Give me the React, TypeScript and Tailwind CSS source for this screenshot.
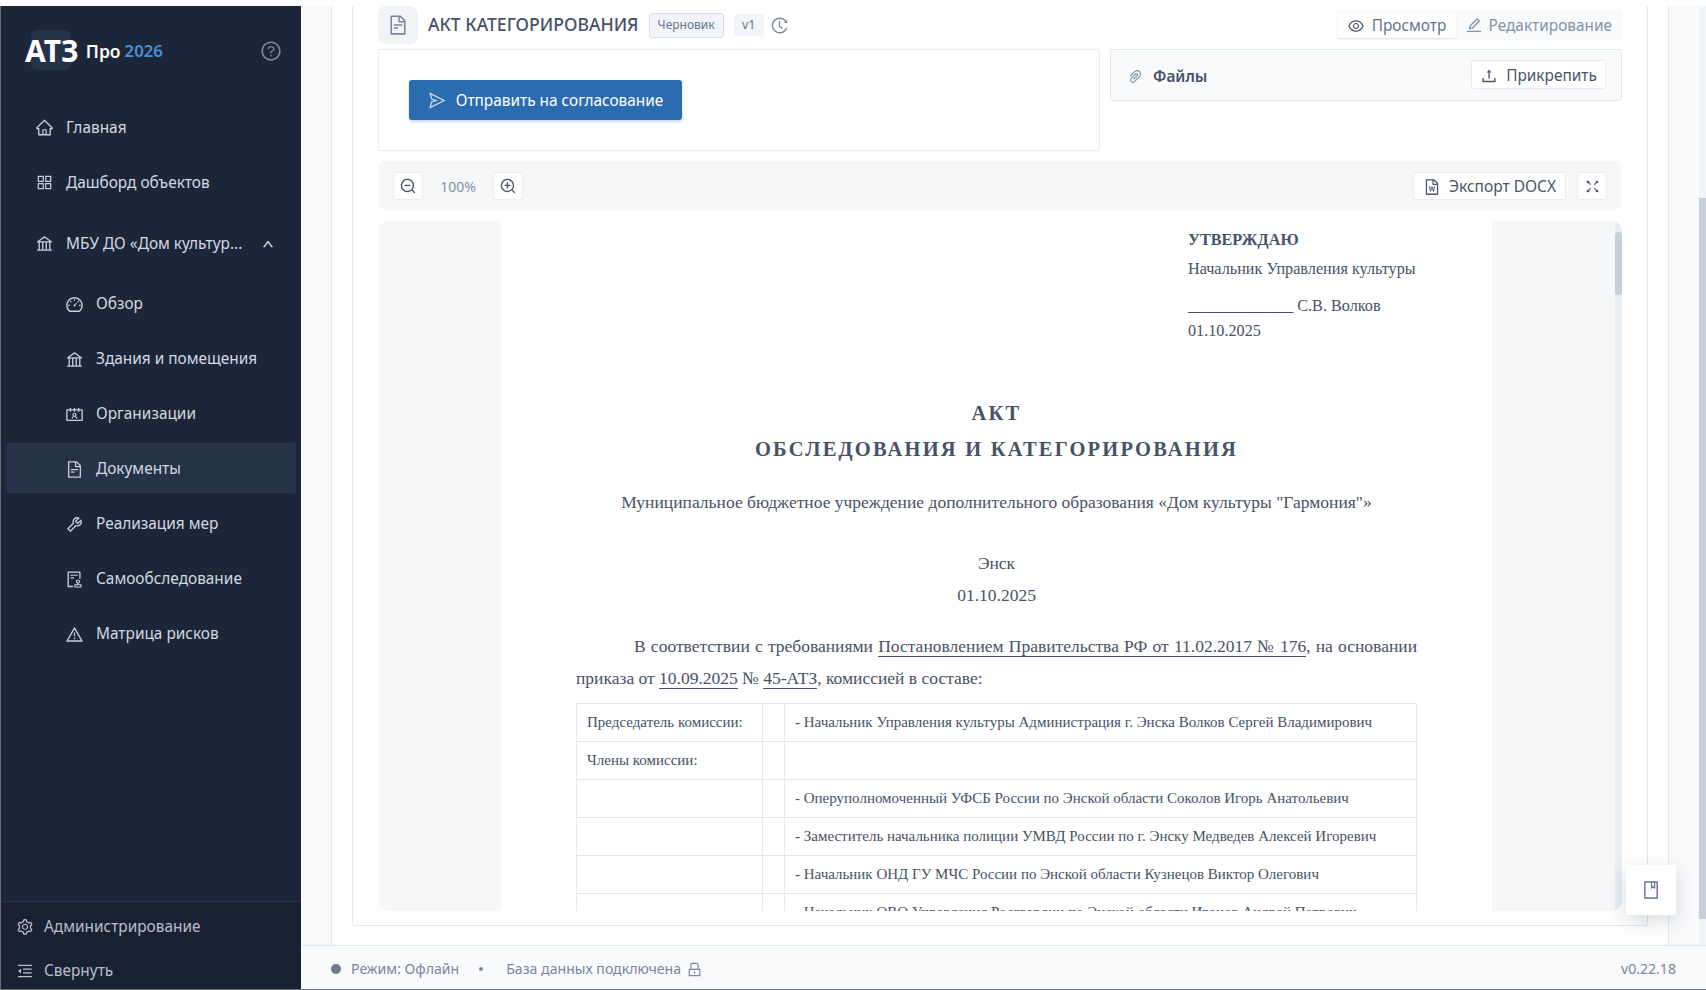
import type { ReactNode } from 'react';
import {
  AiOutlineAppstore,
  AiOutlineAudit,
  AiOutlineBank,
  AiOutlineBook,
  AiOutlineContacts,
  AiOutlineDashboard,
  AiOutlineEdit,
  AiOutlineEye,
  AiOutlineFileText,
  AiOutlineFileWord,
  AiOutlineFullscreen,
  AiOutlineHistory,
  AiOutlineHome,
  AiOutlineLock,
  AiOutlineMenuFold,
  AiOutlinePaperClip,
  AiOutlineQuestionCircle,
  AiOutlineSend,
  AiOutlineSetting,
  AiOutlineTool,
  AiOutlineUp,
  AiOutlineUpload,
  AiOutlineWarning,
  AiOutlineZoomIn,
  AiOutlineZoomOut,
} from 'react-icons/ai';

const subItems = [
  { label: 'Обзор', icon: <AiOutlineDashboard size={19} /> },
  { label: 'Здания и помещения', icon: <AiOutlineBank size={19} /> },
  { label: 'Организации', icon: <AiOutlineContacts size={19} /> },
  { label: 'Документы', icon: <AiOutlineFileText size={19} />, active: true },
  { label: 'Реализация мер', icon: <AiOutlineTool size={19} /> },
  { label: 'Самообследование', icon: <AiOutlineAudit size={19} /> },
  { label: 'Матрица рисков', icon: <AiOutlineWarning size={19} /> },
];

const commission = [
  ['Председатель комиссии:', '- Начальник Управления культуры Администрация г. Энска Волков Сергей Владимирович'],
  ['Члены комиссии:', ''],
  ['', '- Оперуполномоченный УФСБ России по Энской области Соколов Игорь Анатольевич'],
  ['', '- Заместитель начальника полиции УМВД России по г. Энску Медведев Алексей Игоревич'],
  ['', '- Начальник ОНД ГУ МЧС России по Энской области Кузнецов Виктор Олегович'],
  ['', '- Начальник ОВО Управления Росгвардии по Энской области Иванов Андрей Петрович'],
];

function NavRow({ icon, label, sub, active, right }: { icon: ReactNode; label: string; sub?: boolean; active?: boolean; right?: ReactNode }) {
  return (
    <div className="flex h-[55px] items-center">
      <div
        className={`mx-[5px] flex h-[50px] w-[290px] items-center rounded-[3px] ${sub ? 'pl-[59px] pt-[3px]' : 'pl-[29px]'} ${active ? 'bg-[#243347]' : ''}`}
      >
        <span className="flex w-[31px] shrink-0 text-[#c7ced8]">{icon}</span>
        <span className="text-[15.4px] text-[#d3d9e1]">{label}</span>
        {right}
      </div>
    </div>
  );
}

function Sidebar() {
  return (
    <aside className="flex w-[301px] shrink-0 flex-col border-l border-[#666d77] bg-[#1b2638]">
      <div className="flex h-[94px] shrink-0 items-center pb-[4px] pl-[24px]">
        <div className="relative flex items-center">
          <span className="absolute left-[6px] top-[-6px] h-[40px] w-[40px] rounded-[6px] bg-[#243347]" />
          <span className="relative text-[30px] leading-[30px] font-bold text-white">АТЗ</span>
        </div>
        <span className="ml-[7px] text-[17.5px] font-semibold text-white">Про</span>
        <span className="ml-[4px] text-[16.8px] font-semibold text-[#4a90d9]">2026</span>
        <AiOutlineQuestionCircle size={22} className="ml-auto mr-[19px] text-[#7f8998]" />
      </div>
      <nav className="flex-1">
        <NavRow icon={<AiOutlineHome size={19} />} label="Главная" />
        <NavRow icon={<AiOutlineAppstore size={19} />} label="Дашборд объектов" />
        <div className="mt-[6px]">
          <NavRow
            icon={<AiOutlineBank size={19} />}
            label="МБУ ДО «Дом культур..."
            right={<AiOutlineUp size={12} stroke="currentColor" strokeWidth={60} className="ml-[20px] text-[#d3d9e1]" />}
          />
        </div>
        <div className="mt-[4px]">
          {subItems.map((item) => (
            <NavRow key={item.label} icon={item.icon} label={item.label} active={item.active} sub />
          ))}
        </div>
      </nav>
      <div className="shrink-0 border-t border-[#2a3648] bg-[#182232] text-[15.4px] text-[#b7bfca]">
        <div className="flex h-[48px] items-center pl-[15px] pt-[2px]">
          <AiOutlineSetting size={18} className="mr-[10px]" />
          Администрирование
        </div>
        <div className="flex h-[39px] items-center pl-[15px] pt-[3px]">
          <AiOutlineMenuFold size={18} className="mr-[10px]" />
          Свернуть
        </div>
      </div>
    </aside>
  );
}

function Toolbutton({ children, className }: { children: ReactNode; className?: string }) {
  return (
    <button className={`flex h-[28px] items-center justify-center rounded-[2px] border border-[#e8ecf1] bg-white text-[#475569] ${className ?? ''}`}>
      {children}
    </button>
  );
}

function DocumentPage() {
  return (
    <div className="flex h-[690px] overflow-hidden rounded-[10px] bg-[#f6f7f9]">
      <div className="flex flex-1 justify-center overflow-hidden">
        <div className="w-[991px] shrink-0 bg-white px-[75px] pt-[7px] font-['Liberation_Serif',serif] text-[17.5px] text-[#475266]">
          <div className="ml-[612px] whitespace-nowrap text-[16.2px]">
            <p className="leading-[24px] font-bold">УТВЕРЖДАЮ</p>
            <p className="mt-[5px] leading-[24px]">Начальник Управления культуры</p>
            <p className="mt-[13px] leading-[24px]">_____________ С.В. Волков</p>
            <p className="mt-[1px] leading-[24px]">01.10.2025</p>
          </div>
          <h1 className="mt-[52px] text-center text-[20.5px] leading-[36px] font-bold tracking-[2.2px]">АКТ</h1>
          <h2 className="text-center text-[20.5px] leading-[36px] font-bold tracking-[2.2px]">ОБСЛЕДОВАНИЯ И КАТЕГОРИРОВАНИЯ</h2>
          <p className="mt-[23px] text-center leading-[24px]">
            Муниципальное бюджетное учреждение дополнительного образования «Дом культуры "Гармония"»
          </p>
          <p className="mt-[33px] text-center leading-[32px]">Энск</p>
          <p className="text-center leading-[32px]">01.10.2025</p>
          <p className="mt-[19px] text-justify indent-[58px] leading-[32px]">
            В соответствии с требованиями{' '}
            <span className="border-b border-[#475266]">Постановлением Правительства РФ от 11.02.2017 № 176</span>, на основании
            приказа от <span className="border-b border-[#475266]">10.09.2025</span> №{' '}
            <span className="border-b border-[#475266]">45-АТЗ</span>, комиссией в составе:
          </p>
          <table className="mt-[9px] w-full table-fixed border-collapse text-[15px]">
            <colgroup>
              <col className="w-[186px]" />
              <col className="w-[22px]" />
              <col />
            </colgroup>
            <tbody>
              {commission.map((row, i) => (
                <tr key={i} className="h-[38px]">
                  <td className="border border-[#e2e8f0] px-[10px] whitespace-nowrap">{row[0]}</td>
                  <td className="border border-[#e2e8f0]" />
                  <td className="border border-[#e2e8f0] px-[10px] whitespace-nowrap">{row[1]}</td>
                </tr>
              ))}
            </tbody>
          </table>
        </div>
      </div>
      <div className="w-[7px] shrink-0 bg-[#e9eef3] pt-[11px]">
        <div className="h-[63px] rounded-[3px] bg-[#c5d0de]" />
      </div>
    </div>
  );
}

function DocumentCard() {
  return (
    <div className="h-full rounded-b-[3px] border-x border-b border-[#e2e8f0] px-[25px]">
      <div className="flex h-[38px] items-center">
        <div className="flex h-[38px] w-[40px] items-center justify-center rounded-[8px] bg-[#f1f3f6] text-[#7b8698]">
          <AiOutlineFileText size={22} />
        </div>
        <span className="mb-[2px] ml-[10px] text-[17.6px] font-medium text-[#475266]">АКТ КАТЕГОРИРОВАНИЯ</span>
        <span className="ml-[10px] flex h-[25px] items-center rounded-[3px] border border-[#d5dde7] bg-[#f1f5f9] px-[8px] text-[12px] text-[#64748b]">
          Черновик
        </span>
        <span className="ml-[10px] flex h-[22px] w-[30px] items-center justify-center rounded-[3px] bg-[#f1f5f9] text-[12.5px] text-[#64748b]">v1</span>
        <AiOutlineHistory size={19} className="ml-[6px] text-[#7b8698]" />
        <div className="ml-auto flex h-[30px] items-center rounded-[3px] bg-[#f8fafc] pl-[1px] pr-[10px] text-[15.4px]">
          <span className="flex h-[25px] w-[118px] items-center justify-center gap-[7px] rounded-[2px] bg-white pt-[1px] text-[#64748b] shadow-[0_1px_2px_rgba(15,23,42,0.1)]">
            <AiOutlineEye size={18} className="text-[#475569]" />
            Просмотр
          </span>
          <span className="ml-[9px] flex items-center gap-[6px] pt-[1px] text-[#8593a6]">
            <AiOutlineEdit size={18} />
            Редактирование
          </span>
        </div>
      </div>
      <div className="mt-[5px] flex gap-[10px]">
        <div className="h-[102px] w-[722px] rounded-[2px] border border-[#e8ecf1] pl-[30px] pt-[30px]">
          <button className="flex h-[40px] w-[273px] items-center justify-center gap-[9px] rounded-[3px] bg-[#2b6cb0] pt-[1px] text-[15.4px] text-white shadow-[0_2px_3px_rgba(43,108,176,0.25)]">
            <AiOutlineSend size={19} className="text-[#c6d9ee]" />
            Отправить на согласование
          </button>
        </div>
        <div className="flex h-[52px] flex-1 items-center rounded-[2px] border border-[#e2e8f0] bg-[#f8fafc] pl-[16px] pr-[15px]">
          <AiOutlinePaperClip size={17} className="mt-[2px] text-[#8593a6]" />
          <span className="ml-[9px] pt-[3px] text-[15.4px] font-semibold text-[#475266]">Файлы</span>
          <Toolbutton className="ml-auto mb-[1px] h-[29px] w-[135px] gap-[8px] pt-[2px] text-[15.4px] text-[#5c6a7e]">
            <AiOutlineUpload size={18} />
            Прикрепить
          </Toolbutton>
        </div>
      </div>
      <div className="mt-[10px] flex h-[49px] items-center rounded-[8px] bg-[#f5f7f9] pl-[15px] pr-[15px] pt-[1px]">
        <Toolbutton className="w-[30px]">
          <AiOutlineZoomOut size={18} />
        </Toolbutton>
        <span className="w-[70px] text-center text-[14px] text-[#8593a6]">100%</span>
        <Toolbutton className="w-[30px]">
          <AiOutlineZoomIn size={18} />
        </Toolbutton>
        <Toolbutton className="ml-auto w-[153px] gap-[8px] pt-[2px] text-[15.5px] text-[#5c6a7e]">
          <AiOutlineFileWord size={18} className="text-[#475569]" />
          Экспорт DOCX
        </Toolbutton>
        <Toolbutton className="ml-[11px] w-[30px]">
          <AiOutlineFullscreen size={17} />
        </Toolbutton>
      </div>
      <div className="mt-[11px]">
        <DocumentPage />
      </div>
    </div>
  );
}

export default function App() {
  return (
    <div className="flex h-[990px] flex-col border-b border-[#6f7277] bg-white font-['Noto_Sans',sans-serif]">
      <div className="h-[6px] shrink-0 bg-white" />
      <div className="flex min-h-0 flex-1">
        <Sidebar />
        <main className="relative flex min-w-0 flex-1 flex-col bg-[#f8fafc]">
          <div className="flex min-h-0 flex-1">
            <div className="min-w-0 flex-1 pl-[30px] pr-[30px]">
              <div className="h-full border-x border-[#e2e8f0] bg-white px-[20px] pb-[19px]">
                <DocumentCard />
              </div>
            </div>
            <div className="w-[7px] shrink-0 bg-[#f1f5f9] pt-[192px]">
              <div className="h-[721px] bg-[#c5d0de]" />
            </div>
          </div>
          <footer className="flex h-[44px] shrink-0 items-center border-t border-[#e2e8f0] bg-[#f8fafc] pl-[30px] pr-[30px] pt-[3px] text-[14.1px] text-[#7a8699]">
            <span className="h-[10px] w-[10px] rounded-full bg-[#6b7a90]" />
            <span className="ml-[10px]">Режим: Офлайн</span>
            <span className="ml-[20px] h-[4px] w-[4px] rounded-full bg-[#7a8699]" />
            <span className="ml-[23px]">База данных подключена</span>
            <AiOutlineLock size={17} className="ml-[5px]" />
            <span className="ml-auto">v0.22.18</span>
          </footer>
          <button className="absolute bottom-[74px] right-[30px] flex h-[50px] w-[50px] items-center justify-center rounded-[2px] bg-white text-[#64748b] shadow-[0_6px_20px_rgba(15,23,42,0.16)]">
            <AiOutlineBook size={20} />
          </button>
        </main>
      </div>
    </div>
  );
}
